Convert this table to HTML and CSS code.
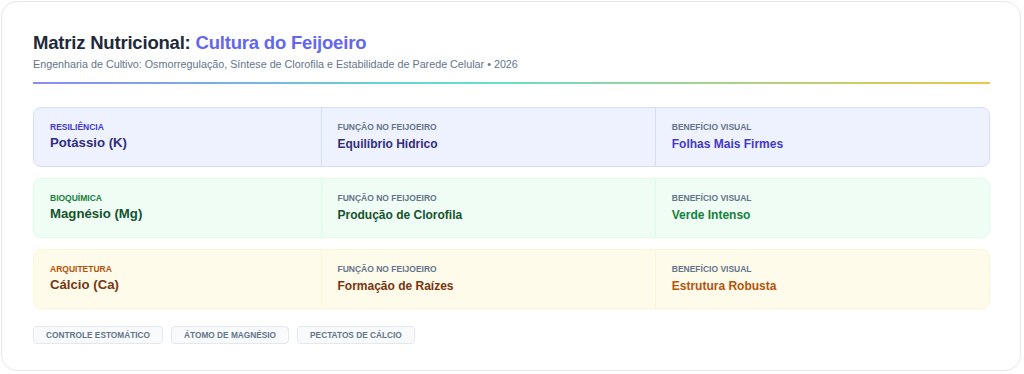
FILE: index.html
```html
<!DOCTYPE html>
<html lang="pt">
<head>
<meta charset="utf-8">
<link rel="stylesheet" href="styles.css">
</head>
<body>
<div class="card">
  <header class="head">
    <h1 class="title">Matriz Nutricional: <span class="accent">Cultura do Feijoeiro</span></h1>
    <p class="sub">Engenharia de Cultivo: Osmorregulação, Síntese de Clorofila e Estabilidade de Parede Celular • 2026</p>
  </header>
  <div class="rule"></div>
  <div class="rows">
    <div class="row k">
      <div class="cell"><div class="lbl tone">Resiliência</div><div class="val main dark">Potássio (K)</div></div>
      <div class="cell"><div class="lbl">Função no Feijoeiro</div><div class="val dark">Equilíbrio Hídrico</div></div>
      <div class="cell"><div class="lbl">Benefício Visual</div><div class="val tone">Folhas Mais Firmes</div></div>
    </div>
    <div class="row mg">
      <div class="cell"><div class="lbl tone">Bioquímica</div><div class="val main dark">Magnésio (Mg)</div></div>
      <div class="cell"><div class="lbl">Função no Feijoeiro</div><div class="val dark">Produção de Clorofila</div></div>
      <div class="cell"><div class="lbl">Benefício Visual</div><div class="val tone">Verde Intenso</div></div>
    </div>
    <div class="row ca">
      <div class="cell"><div class="lbl tone">Arquitetura</div><div class="val main dark">Cálcio (Ca)</div></div>
      <div class="cell"><div class="lbl">Função no Feijoeiro</div><div class="val dark">Formação de Raízes</div></div>
      <div class="cell"><div class="lbl">Benefício Visual</div><div class="val tone">Estrutura Robusta</div></div>
    </div>
  </div>
  <div class="tags">
    <span class="tag">Controle Estomático</span>
    <span class="tag">Átomo de Magnésio</span>
    <span class="tag">Pectatos de Cálcio</span>
  </div>
</div>
</body>
</html>
```
FILE: styles.css
```css
* { box-sizing: border-box; }
html, body { margin: 0; padding: 0; background: #ffffff; }
body {
  font-family: "Liberation Sans", Arial, sans-serif;
  padding: 1px 3px 3px 1px;
}
.card {
  width: 1020px;
  height: 370px;
  border: 1px solid #e5e7eb;
  border-radius: 16px;
  background: #fff;
  padding: 29px 30px 0 31px;
}
.head { margin: 0; }
.title {
  margin: 0;
  font-size: 18.5px;
  line-height: 24px;
  font-weight: 700;
  color: #1e293b;
  letter-spacing: -0.2px;
}
.accent { color: #6366f1; }
.sub {
  margin: 2px 0 0;
  font-size: 10.75px;
  line-height: 14px;
  color: #64748b;
}
.rule {
  margin-top: 11px;
  height: 2px;
  background: linear-gradient(90deg, #6366f1 0%, #2dd4bf 45%, #eab308 100%);
  opacity: 0.75;
}
.rows {
  margin-top: 23px;
  display: flex;
  flex-direction: column;
  gap: 11px;
}
.row {
  display: grid;
  grid-template-columns: 6fr 7fr 7fr;
  height: 60px;
  border: 1px solid;
  border-radius: 8px;
  overflow: hidden;
}
.cell {
  padding: 14px 16px 0;
  border-left: 1px solid;
  border-color: inherit;
}
.cell:first-child { border-left: none; }
.lbl {
  font-size: 8.5px;
  line-height: 11px;
  font-weight: 700;
  text-transform: uppercase;
  color: #64748b;
}
.val {
  margin-top: 3px;
  font-size: 12px;
  line-height: 16px;
  font-weight: 700;
}
.val.main {
  margin-top: 2px;
  font-size: 13.2px;
}
.row.k { background: #eef2ff; border-color: #d6ddfb; }
.row.k .tone { color: #4338ca; }
.row.k .dark { color: #312e81; }
.row.mg { background: #f0fdf4; border-color: #dcfce7; }
.row.mg .tone { color: #15803d; }
.row.mg .dark { color: #14532d; }
.row.ca { background: #fffbeb; border-color: #fdf3d6; }
.row.ca .tone { color: #b45309; }
.row.ca .dark { color: #78350f; }
.tags {
  margin-top: 17px;
  display: flex;
  gap: 8px;
}
.tag {
  font-size: 8.3px;
  line-height: 10px;
  font-weight: 700;
  text-transform: uppercase;
  color: #64748b;
  background: #f8fafc;
  border: 1px solid #e2e8f0;
  border-radius: 4px;
  padding: 3px 12px;
}
```
